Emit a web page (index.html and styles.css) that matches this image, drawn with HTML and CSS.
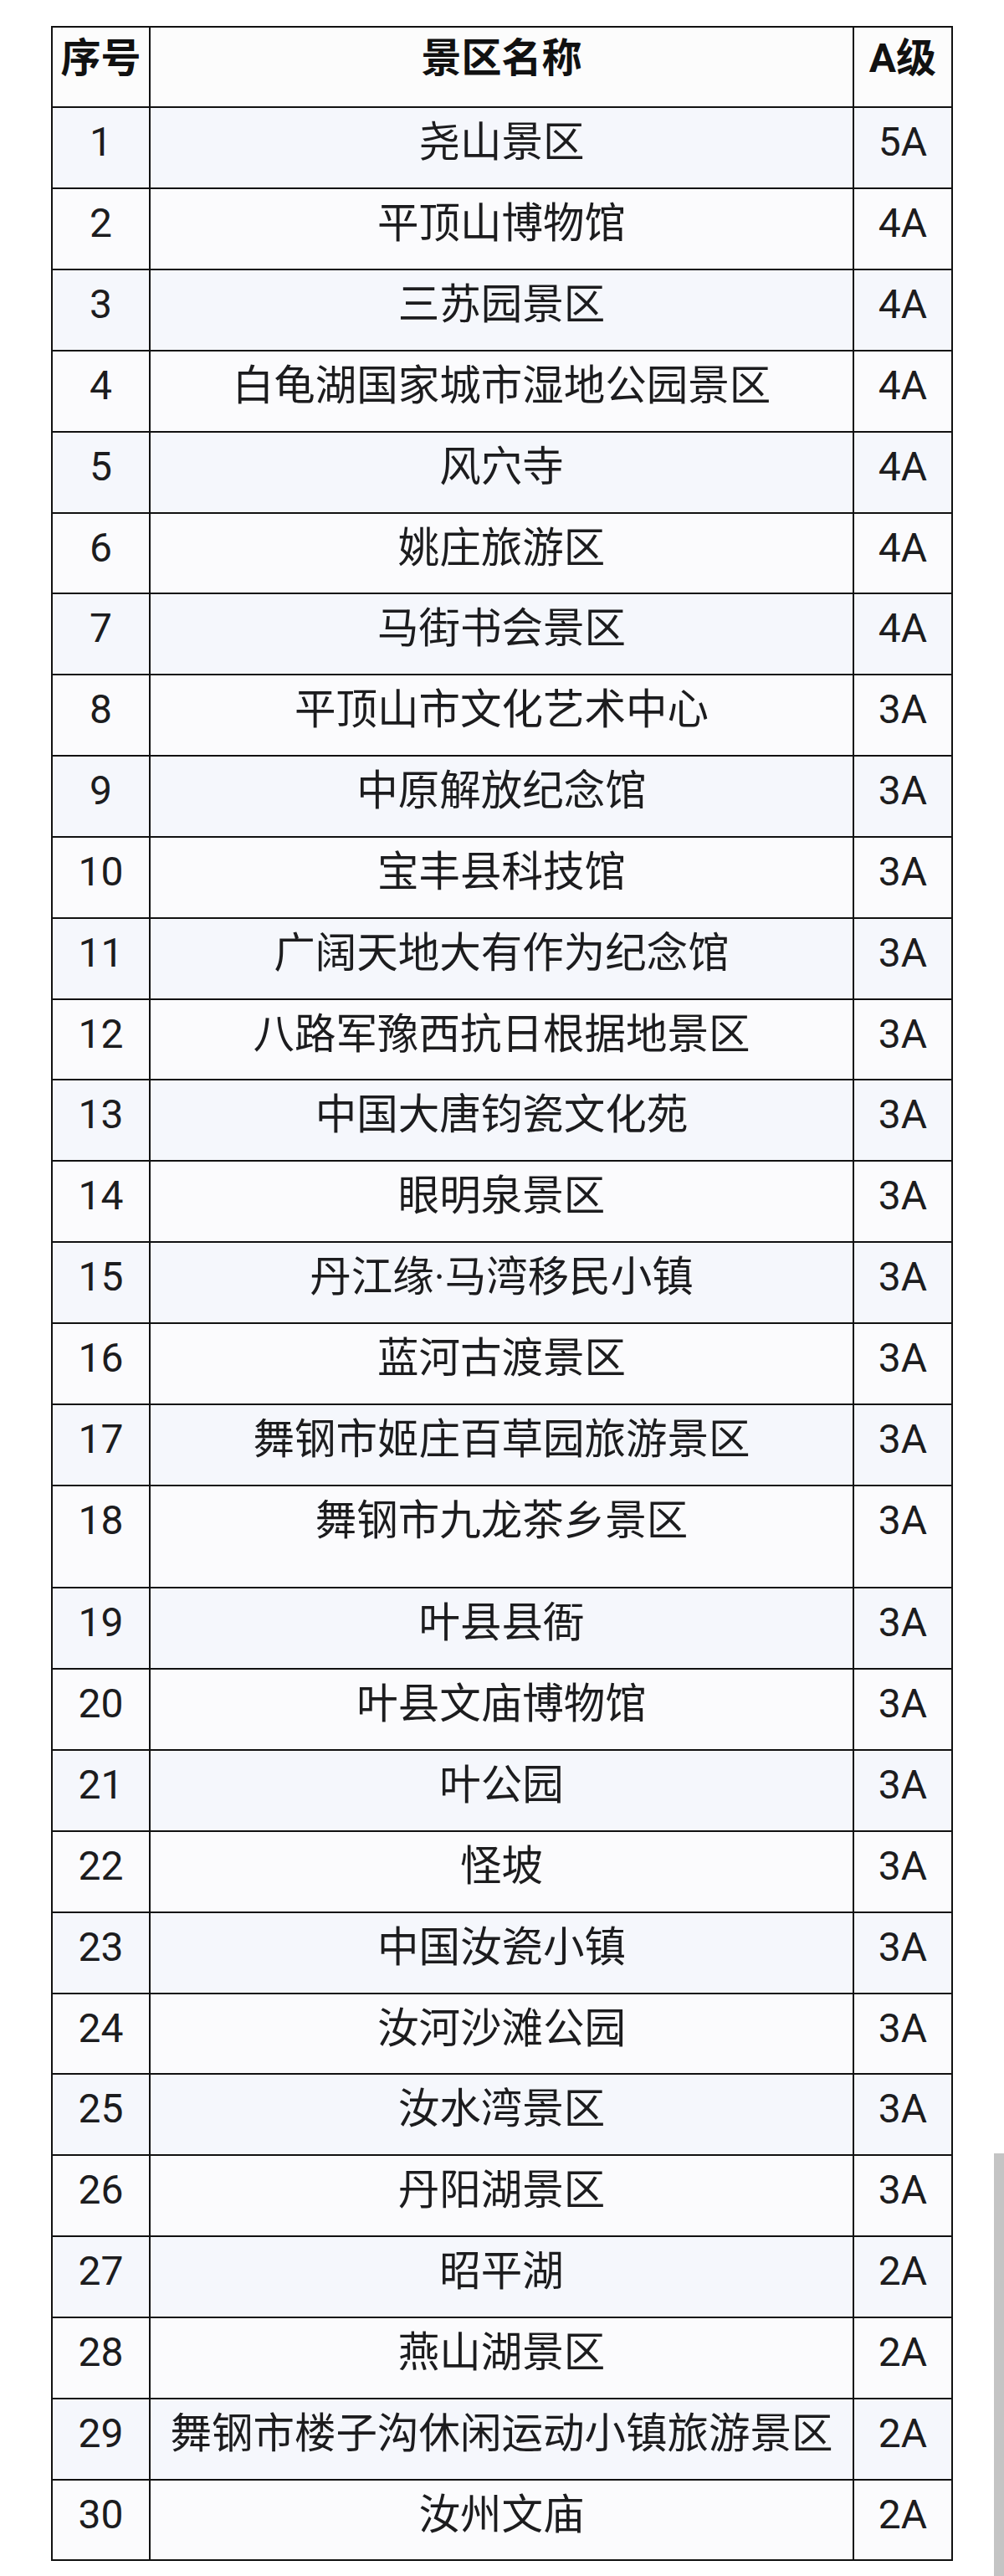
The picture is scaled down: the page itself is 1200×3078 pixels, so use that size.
FILE: index.html
```html
<!DOCTYPE html>
<html lang="zh-CN">
<head>
<meta charset="utf-8">
<title>平顶山A级景区</title>
<link rel="stylesheet" href="styles.css">
</head>
<body>
<table class="scenic">
  <colgroup>
    <col class="c-no">
    <col class="c-name">
    <col class="c-level">
  </colgroup>
  <thead>
    <tr><th>序号</th><th>景区名称</th><th>A级</th></tr>
  </thead>
  <tbody>
    <tr><td>1</td><td>尧山景区</td><td>5A</td></tr>
    <tr><td>2</td><td>平顶山博物馆</td><td>4A</td></tr>
    <tr><td>3</td><td>三苏园景区</td><td>4A</td></tr>
    <tr><td>4</td><td>白龟湖国家城市湿地公园景区</td><td>4A</td></tr>
    <tr><td>5</td><td>风穴寺</td><td>4A</td></tr>
    <tr><td>6</td><td>姚庄旅游区</td><td>4A</td></tr>
    <tr><td>7</td><td>马街书会景区</td><td>4A</td></tr>
    <tr><td>8</td><td>平顶山市文化艺术中心</td><td>3A</td></tr>
    <tr><td>9</td><td>中原解放纪念馆</td><td>3A</td></tr>
    <tr><td>10</td><td>宝丰县科技馆</td><td>3A</td></tr>
    <tr><td>11</td><td>广阔天地大有作为纪念馆</td><td>3A</td></tr>
    <tr><td>12</td><td>八路军豫西抗日根据地景区</td><td>3A</td></tr>
    <tr><td>13</td><td>中国大唐钧瓷文化苑</td><td>3A</td></tr>
    <tr><td>14</td><td>眼明泉景区</td><td>3A</td></tr>
    <tr><td>15</td><td>丹江缘·马湾移民小镇</td><td>3A</td></tr>
    <tr><td>16</td><td>蓝河古渡景区</td><td>3A</td></tr>
    <tr><td>17</td><td>舞钢市姬庄百草园旅游景区</td><td>3A</td></tr>
    <tr class="tall"><td>18</td><td>舞钢市九龙茶乡景区</td><td>3A</td></tr>
    <tr><td>19</td><td>叶县县衙</td><td>3A</td></tr>
    <tr><td>20</td><td>叶县文庙博物馆</td><td>3A</td></tr>
    <tr><td>21</td><td>叶公园</td><td>3A</td></tr>
    <tr><td>22</td><td>怪坡</td><td>3A</td></tr>
    <tr><td>23</td><td>中国汝瓷小镇</td><td>3A</td></tr>
    <tr><td>24</td><td>汝河沙滩公园</td><td>3A</td></tr>
    <tr><td>25</td><td>汝水湾景区</td><td>3A</td></tr>
    <tr><td>26</td><td>丹阳湖景区</td><td>3A</td></tr>
    <tr><td>27</td><td>昭平湖</td><td>2A</td></tr>
    <tr><td>28</td><td>燕山湖景区</td><td>2A</td></tr>
    <tr><td>29</td><td>舞钢市楼子沟休闲运动小镇旅游景区</td><td>2A</td></tr>
    <tr><td>30</td><td>汝州文庙</td><td>2A</td></tr>
  </tbody>
</table>
<div class="scrollbar"></div>
</body>
</html>
```

FILE: styles.css
```css
html, body {
  margin: 0;
  padding: 0;
  background: #ffffff;
}

body {
  font-family: Roboto, "Noto Sans CJK SC", sans-serif;
  color: #1c1c1e;
}

.scenic {
  border-collapse: collapse;
  margin: 31px 0 0 61px;
  width: 1076px;
  table-layout: fixed;
}

.c-no { width: 117px; }
.c-name { width: 841px; }
.c-level { width: 118px; }

.scenic th,
.scenic td {
  border: 2px solid #111111;
  padding: 13px 0 26px 0;
  height: 56px;
  font-size: 48px;
  line-height: 56px;
  text-align: center;
  vertical-align: top;
  white-space: nowrap;
}

.scenic td:nth-child(2) {
  font-size: 49.5px;
}

.scenic th {
  font-weight: 700;
  color: #111111;
  background: #fcfcfc;
  padding-top: 9px;
  padding-bottom: 29px;
}

.scenic tbody tr:nth-child(odd) td {
  background: #f5f7fc;
}

.scenic tbody tr:nth-child(even) td {
  background: #fbfbfd;
}

.scenic tbody tr:nth-child(6n) td {
  padding-bottom: 25px;
}

.scenic tbody tr.tall td {
  padding-bottom: 51px;
}

.scrollbar {
  position: absolute;
  left: 1188px;
  top: 2573px;
  width: 12px;
  height: 505px;
  background: #c4c4c4;
}
```
